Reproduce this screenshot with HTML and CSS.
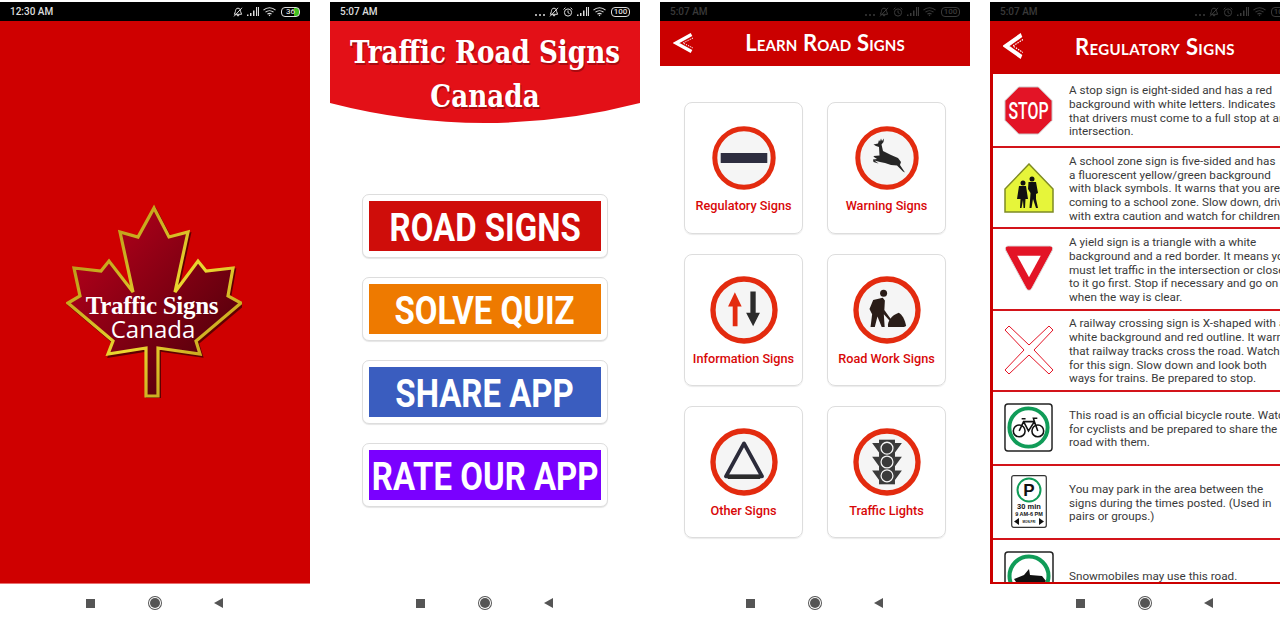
FILE: index.html
```html
<!DOCTYPE html>
<html lang="en">
<head>
    <meta charset="UTF-8">
    <meta name="viewport" content="width=device-width, initial-scale=1.0">
    <title>Traffic Road Signs Canada</title>
    <link rel="stylesheet" href="styles.css">
</head>
<body>
    <svg class="sprite" xmlns="http://www.w3.org/2000/svg">
        <symbol id="bell-off" viewBox="0 0 10 10"><path d="M5 1.200C3 1.200 2.400 3 2.400 4.500L1.400 7.300H8.600L7.600 4.500C7.600 3 7 1.200 5 1.200ZM4 8.200H6L5 9.200ZM1 9.400L9 .8" fill="none" stroke="currentColor" stroke-width="1"/></symbol>
        <symbol id="alarm" viewBox="0 0 10 10"><circle cx="5" cy="5.500" r="3.600" fill="none" stroke="currentColor"/><path d="M5 3.500V5.700L6.500 6.500M.6 2.400L2.400 .7M9.400 2.400L7.600 .7" fill="none" stroke="currentColor"/></symbol>
        <symbol id="signal" viewBox="0 0 12 9"><path d="M0 7.500h1.500V9H0ZM3 6h1.500v3H3ZM6 3.500h1.500V9H6ZM9 0h1.200v9H9ZM11 0h1v9h-1Z" fill="currentColor"/></symbol>
        <symbol id="wifi" viewBox="0 0 13 10"><path d="M.5 3.200C4 0 9 0 12.500 3.200M2.500 5.200C4.800 3.200 8.200 3.200 10.500 5.200M4.400 7.200C5.600 6.200 7.400 6.200 8.600 7.200" fill="none" stroke="currentColor" stroke-width="1.100"/><path d="M5.600 8.300L6.500 7.500 7.400 8.300 6.500 9.300Z" fill="currentColor"/></symbol>
        <symbol id="back" viewBox="0 0 20 20" preserveAspectRatio="none"><path d="M18.500 1.500L3 10 18.500 18.500" fill="none" stroke="#fff" stroke-width="3.400"/><path d="M20 5L10 10 20 15" fill="none" stroke="#fff" stroke-width="1" stroke-dasharray="1.400 1"/></symbol>
    </svg>

    <main class="phones">
        <!-- splash -->
        <section class="phone">
            <div class="status">
                <span class="time">12:30 AM</span>
                <div class="status-icons">
                    <svg class="ic-10"><use href="#bell-off"/></svg>
                    <svg class="ic-signal"><use href="#signal"/></svg>
                    <svg class="ic-wifi"><use href="#wifi"/></svg>
                    <span class="battery battery-low">36</span>
                </div>
            </div>
            <div class="screen splash">
                <svg class="logo" viewBox="0 0 176 194" xmlns="http://www.w3.org/2000/svg">
                    <defs>
                        <linearGradient id="leaf" x1="0" y1="0" x2="1" y2="1">
                            <stop offset="0" stop-color="#c4001d"/>
                            <stop offset="1" stop-color="#3e0008"/>
                        </linearGradient>
                        <linearGradient id="gold" x1="0" y1="0" x2="1" y2="1">
                            <stop offset="0" stop-color="#a8820e"/>
                            <stop offset=".55" stop-color="#ecd830"/>
                            <stop offset="1" stop-color="#a87c10"/>
                        </linearGradient>
                    </defs>
                    <polygon points="88,4 103,33 122,28 109,88 132,57 140,67 167,64 162,92 175,99 130,137 134,150 92,144 92,192 80,192 80,144 42,150 47,137 2,99 14,92 8,64 35,67 43,57 67,88 54,28 72,33" transform="translate(1.500,2)" fill="#3a0000" stroke="#3a0000" stroke-width="3" opacity=".75"/>
                    <polygon points="88,4 103,33 122,28 109,88 132,57 140,67 167,64 162,92 175,99 130,137 134,150 92,144 92,192 80,192 80,144 42,150 47,137 2,99 14,92 8,64 35,67 43,57 67,88 54,28 72,33" fill="url(#leaf)" stroke="url(#gold)" stroke-width="3.200"/>
                    <text class="logo-title" x="86" y="110" text-anchor="middle">Traffic Signs</text>
                    <text class="logo-sub" x="87" y="134" text-anchor="middle">Canada</text>
                </svg>
            </div>
            <div class="nav"><i class="nav-square"></i><i class="nav-circle"></i><i class="nav-back"></i></div>
        </section>

        <!-- main menu -->
        <section class="phone">
            <div class="status">
                <span class="time">5:07 AM</span>
                <div class="status-icons">
                    <span class="dots"><i></i><i></i><i></i></span>
                    <svg class="ic-10"><use href="#bell-off"/></svg>
                    <svg class="ic-10"><use href="#alarm"/></svg>
                    <svg class="ic-signal"><use href="#signal"/></svg>
                    <svg class="ic-wifi"><use href="#wifi"/></svg>
                    <span class="battery">100</span>
                </div>
            </div>
            <div class="screen menu">
                <h1 class="banner"><span>Traffic Road Signs</span><span>Canada</span></h1>
                <div class="menu-list">
                    <a class="menu-btn"><span class="btn-red"><b>ROAD SIGNS</b></span></a>
                    <a class="menu-btn"><span class="btn-orange"><b>SOLVE QUIZ</b></span></a>
                    <a class="menu-btn"><span class="btn-blue"><b>SHARE APP</b></span></a>
                    <a class="menu-btn"><span class="btn-purple"><b>RATE OUR APP</b></span></a>
                </div>
            </div>
            <div class="nav"><i class="nav-square"></i><i class="nav-circle"></i><i class="nav-back"></i></div>
        </section>

        <!-- categories -->
        <section class="phone">
            <div class="status dim">
                <span class="time">5:07 AM</span>
                <div class="status-icons">
                    <span class="dots"><i></i><i></i><i></i></span>
                    <svg class="ic-10"><use href="#bell-off"/></svg>
                    <svg class="ic-10"><use href="#alarm"/></svg>
                    <svg class="ic-signal"><use href="#signal"/></svg>
                    <svg class="ic-wifi"><use href="#wifi"/></svg>
                    <span class="battery">100</span>
                </div>
            </div>
            <div class="screen">
                <header class="topbar">
                    <svg class="back"><use href="#back"/></svg>
                    <h2>Learn Road Signs</h2>
                </header>
                <div class="cards">
                    <div class="card">
                        <svg class="sign" viewBox="0 0 64 64"><circle class="ring" cx="32" cy="32" r="29.200"/><rect x="8.700" y="27" width="46.600" height="10" rx=".5" fill="#2d2d3f"/></svg>
                        <span>Regulatory Signs</span>
                    </div>
                    <div class="card">
                        <svg class="sign" viewBox="0 0 64 64"><circle class="ring" cx="32" cy="32" r="29.200"/><path d="M18.500 18.500L23 17.500 24 14 25 15.500 26 12.500 27 15 29 12.500 28.500 16 26.500 18.500 28 25 36 29 43 32 46 36 45 39 50 46.500 48 45.500 42 39.500 36 39 30 37 25 36 19.500 34.500 23.500 37.500 18.500 36 18 33.500 22 33 19 31 18.500 30 24.500 29.500 24 21 21 20Z" fill="#262626"/></svg>
                        <span>Warning Signs</span>
                    </div>
                    <div class="card">
                        <svg class="sign sign-lg" viewBox="0 0 64 64"><circle class="ring" cx="32" cy="32" r="29.200"/><path d="M23.400 15.400L29.800 28.800H25.900V47.400H21.400V28.800H17Z" fill="#e32b0f"/><path d="M38 14.700H43V34.600H47L40.600 47.400 34 34.600H38Z" fill="#2b2b2b"/></svg>
                        <span>Information Signs</span>
                    </div>
                    <div class="card">
                        <svg class="sign sign-lg" viewBox="0 0 64 64"><circle class="ring" cx="32" cy="32" r="29.200"/><circle cx="28.800" cy="16.300" r="3.300" fill="#2a1d18"/><path d="M15.500 31L19 22.500 28 20.500 30 23 29.500 32 33 37 36 41 34.500 42 29 36 29.800 48H27L23 38 20.500 48H16.500L18 36Z" fill="#2a1d18"/><path d="M33 48C32 43 36 37 43 34.500C46 36 49 41 50 47L48 48Z" fill="#2a1d18"/></svg>
                        <span>Road Work Signs</span>
                    </div>
                    <div class="card">
                        <svg class="sign sign-lg" viewBox="0 0 64 64"><circle class="ring" cx="32" cy="32" r="29.200"/><path d="M32 14.500L15 45.500H49Z" fill="none" stroke="#2b2b3a" stroke-width="3.600" stroke-linejoin="round"/><path d="M15 44H49L47 48H17Z" fill="#2b2b2b"/></svg>
                        <span>Other Signs</span>
                    </div>
                    <div class="card">
                        <svg class="sign sign-lg" viewBox="0 0 64 64"><circle class="ring" cx="32" cy="32" r="29.200"/><path d="M18 14H24.500V23ZM46 14H39.500V23ZM18 27H24.500V36ZM46 27H39.500V36ZM18 40H24.500V49ZM46 40H39.500V49Z" fill="#3a3a3a"/><rect x="24.500" y="11" width="15" height="42" fill="#3a3a3a"/><g class="lamp"><circle cx="32" cy="19" r="5.600"/><circle cx="32" cy="32" r="5.600"/><circle cx="32" cy="45" r="5.600"/></g></svg>
                        <span>Traffic Lights</span>
                    </div>
                </div>
            </div>
            <div class="nav"><i class="nav-square"></i><i class="nav-circle"></i><i class="nav-back"></i></div>
        </section>

        <!-- sign list -->
        <section class="phone">
            <div class="status dim">
                <span class="time">5:07 AM</span>
                <div class="status-icons">
                    <span class="dots"><i></i><i></i><i></i></span>
                    <svg class="ic-10"><use href="#bell-off"/></svg>
                    <svg class="ic-10"><use href="#alarm"/></svg>
                    <svg class="ic-signal"><use href="#signal"/></svg>
                    <svg class="ic-wifi"><use href="#wifi"/></svg>
                    <span class="battery">100</span>
                </div>
            </div>
            <div class="screen list-screen">
                <header class="topbar topbar-tall">
                    <svg class="back"><use href="#back"/></svg>
                    <h2>Regulatory Signs</h2>
                </header>
                <div class="sign-list">
                    <div class="row row-4">
                        <div class="row-icon">
                            <svg width="49" height="49" viewBox="0 0 50 50"><polygon points="15,1 35,1 49,15 49,35 35,49 15,49 1,35 1,15" fill="#e31426" stroke="#ccc" stroke-width="1"/><text class="stop-text" x="25" y="33.500" text-anchor="middle" textLength="41" lengthAdjust="spacingAndGlyphs">STOP</text></svg>
                        </div>
                        <p>A stop sign is eight-sided and has a red<br>background with white letters. Indicates<br>that drivers must come to a full stop at an<br>intersection.</p>
                    </div>
                    <div class="row row-5">
                        <div class="row-icon">
                            <svg width="50" height="50" viewBox="0 0 50 50"><polygon points="25,1 49,26 49,49 1,49 1,26" fill="#e6f53a" stroke="#7e8a24" stroke-width="1.500"/><g fill="#111"><circle cx="19" cy="20" r="2.500"/><path d="M15 23H22L24 36H21.500L21 45H19.500L19 37 17.500 45H16L16.500 36H13Z"/><circle cx="28" cy="16" r="2.500"/><path d="M24.500 19H32L34 30 32 31 32 36 34 45H32L29 36 27.500 45H25.500L26.500 30 24 26Z"/></g></svg>
                        </div>
                        <p>A school zone sign is five-sided and has<br>a fluorescent yellow/green background<br>with black symbols. It warns that you are<br>coming to a school zone. Slow down, drive<br>with extra caution and watch for children.</p>
                    </div>
                    <div class="row row-5">
                        <div class="row-icon">
                            <svg width="50" height="47" viewBox="0 0 50 48"><path d="M4 1H46C49 1 50 3.500 48.500 6L28 44C26.500 47 23.500 47 22 44L1.500 6C0 3.500 1 1 4 1Z" fill="#e31426" stroke="#ddd"/><polygon points="13,11 37,11 25,33" fill="#fff"/></svg>
                        </div>
                        <p>A yield sign is a triangle with a white<br>background and a red border. It means you<br>must let traffic in the intersection or close<br>to it go first. Stop if necessary and go on<br>when the way is clear.</p>
                    </div>
                    <div class="row row-5">
                        <div class="row-icon">
                            <svg width="50" height="50" viewBox="0 0 50 50"><path d="M5 1L25 20 45 1 49 5 30 25 49 45 45 49 25 30 5 49 1 45 20 25 1 5Z" fill="#fff" stroke="#e31426" stroke-width="1"/></svg>
                        </div>
                        <p>A railway crossing sign is X-shaped with a<br>white background and red outline. It warns<br>that railway tracks cross the road. Watch<br>for this sign. Slow down and look both<br>ways for trains. Be prepared to stop.</p>
                    </div>
                    <div class="row row-3">
                        <div class="row-icon">
                            <svg width="49" height="49" viewBox="0 0 50 50"><rect x="1" y="1" width="48" height="48" rx="3" fill="#fff" stroke="#222" stroke-width="1.500"/><circle cx="25" cy="25" r="19.500" fill="#fff" stroke="#109c58" stroke-width="4"/><g fill="none" stroke="#111" stroke-width="1.600"><circle cx="15.500" cy="28.500" r="6"/><circle cx="34.500" cy="28.500" r="6"/><path d="M15.500 28.500L20 19 31 19 34.500 28.500M20 19L25 28.500 31 19M18 16H22M31 19L30 15.500H34"/></g></svg>
                        </div>
                        <p>This road is an official bicycle route. Watch<br>for cyclists and be prepared to share the<br>road with them.</p>
                    </div>
                    <div class="row row-3">
                        <div class="row-icon">
                            <svg width="36" height="53" viewBox="0 0 36 53"><rect x=".7" y=".7" width="34.600" height="51.600" rx="2" fill="#fff" stroke="#333" stroke-width="1.200"/><circle cx="18" cy="15" r="11.500" fill="#fff" stroke="#109c58" stroke-width="2"/><text class="park-p" x="18" y="20.500" text-anchor="middle">P</text><text class="park-min" x="18" y="34" text-anchor="middle">30 min</text><text class="park-hours" x="18" y="41" text-anchor="middle">9 AM-6 PM</text><path d="M3 46.500L8 43V50ZM33 46.500L28 43V50Z" fill="#111"/><text class="park-days" x="18" y="48" text-anchor="middle">MON-FRI</text></svg>
                        </div>
                        <p>You may park in the area between the<br>signs during the times posted. (Used in<br>pairs or groups.)</p>
                    </div>
                    <div class="row row-snow">
                        <div class="row-icon">
                            <svg width="50" height="50" viewBox="0 0 50 50"><rect x="1" y="1" width="48" height="48" rx="3" fill="#fff" stroke="#222" stroke-width="1.500"/><circle cx="25" cy="25" r="19.500" fill="#fff" stroke="#109c58" stroke-width="4"/><path d="M10 28L20 24 25 18 26 24 38 25 42 30 38 34H14Z" fill="#111"/></svg>
                        </div>
                        <p>Snowmobiles may use this road.</p>
                    </div>
                </div>
            </div>
            <div class="nav"><i class="nav-square"></i><i class="nav-circle"></i><i class="nav-back"></i></div>
        </section>
    </main>
</body>
</html>
```

FILE: styles.css
```css
html, body {
    height: 100%;
    overflow: hidden;
}
body {
    margin: 0;
    background: #fff;
    font-family: Roboto, sans-serif;
    color: #333;
}
.sprite {
    display: none;
}
.phones {
    display: flex;
    gap: 20px;
    padding-top: 2px;
}
.phone {
    flex: 0 0 310px;
    width: 310px;
    display: flex;
    flex-direction: column;
}

/* status bar */
.status {
    height: 19px;
    background: #000;
    color: #ddd;
    display: flex;
    align-items: center;
    justify-content: space-between;
    padding: 0 10px;
    font-size: 10px;
    font-weight: 500;
}
.status.dim {
    color: #3a3a3a;
}
.status-icons {
    display: flex;
    align-items: center;
    gap: 4px;
}
.ic-10 {
    width: 10px;
    height: 10px;
}
.ic-signal {
    width: 12px;
    height: 9px;
}
.ic-wifi {
    width: 13px;
    height: 10px;
}
.dots {
    display: flex;
    gap: 2px;
    align-items: flex-end;
    height: 8px;
}
.dots i {
    width: 2px;
    height: 2px;
    background: currentColor;
    border-radius: 50%;
}
.battery {
    width: 17px;
    height: 8px;
    border: 1px solid currentColor;
    border-radius: 4px;
    font-size: 8px;
    line-height: 8px;
    text-align: center;
    margin-left: 1px;
}
.battery-low {
    background: linear-gradient(to right, transparent 70%, #3fbf1f 70%);
}

/* screens */
.screen {
    height: 563px;
    background: #fff;
    overflow: hidden;
}
.splash {
    background: #cf0000;
    display: flex;
    justify-content: center;
    border-bottom: 1px solid #e87070;
    box-sizing: border-box;
}
.logo {
    width: 176px;
    height: 194px;
    margin: 183px 0 0 -2px;
}
.logo-title {
    font: bold 25px "Liberation Serif", serif;
    letter-spacing: -.3px;
    fill: #fff;
}
.logo-sub {
    font: 24px "Open Sans", sans-serif;
    fill: #fff;
}

/* menu */
.banner {
    margin: 0;
    height: 102px;
    padding-top: 9px;
    background: #e31017;
    color: #fff;
    font: bold 32px/44px "DejaVu Serif", serif;
    text-shadow: 1px 2px 0 #a80b10;
    clip-path: path("M0 0H310V82Q155 122 0 82Z");
}
.banner span {
    display: flex;
    justify-content: center;
    white-space: nowrap;
    transform: scaleX(.82);
}
.menu-list {
    display: flex;
    flex-direction: column;
    gap: 19px;
    padding: 62px 32px 0;
}
.menu-btn {
    display: block;
    width: 232px;
    height: 50px;
    padding: 6px;
    background: #fff;
    border: 1px solid #ddd;
    border-radius: 7px;
    box-shadow: 0 1px 1px rgba(0,0,0,0.1);
}
.menu-btn span {
    display: flex;
    height: 50px;
    padding-top: 4px;
    box-sizing: border-box;
    align-items: center;
    justify-content: center;
    color: #fff;
}
.menu-btn b {
    display: block;
    font: bold 39px Roboto, sans-serif;
    white-space: nowrap;
    transform: scaleX(.845);
}
.btn-red {
    background: #cf0d0a;
}
.btn-orange {
    background: #ee7a00;
}
.btn-blue {
    background: #3a5dbf;
}
.btn-purple {
    background: #7a00ff;
}

/* top bar */
.topbar {
    height: 45px;
    background: #cb0000;
    display: flex;
    align-items: center;
    justify-content: center;
    padding-left: 20px;
    position: relative;
}
.topbar-tall {
    height: 53px;
}
.topbar h2 {
    margin: -3px 0 0;
    color: #fff;
    font: 700 22px Lato, sans-serif;
    font-variant: small-caps;
    letter-spacing: .15px;
}
.topbar-tall h2 {
    letter-spacing: .38px;
}
.back {
    position: absolute;
    left: 13px;
    top: 12px;
    width: 20px;
    height: 20px;
}
.topbar-tall .back {
    height: 26px;
}

/* category cards */
.cards {
    display: grid;
    grid-template-columns: 119px 119px;
    grid-auto-rows: 132px;
    column-gap: 24px;
    row-gap: 20px;
    padding: 36px 24px 0;
}
.card {
    border: 1px solid #ddd;
    border-radius: 8px;
    box-shadow: 0 1px 1px rgba(0,0,0,0.08);
    display: flex;
    flex-direction: column;
    align-items: center;
    box-sizing: border-box;
    padding-top: 23px;
    color: #d80808;
    font-size: 12.700px;
    font-weight: 500;
}
.card span {
    white-space: nowrap;
    margin-top: 8px;
}
.sign {
    width: 64px;
    height: 64px;
    flex: none;
}
.sign-lg {
    width: 68px;
    height: 68px;
    margin-top: -2px;
}
.sign-lg + span {
    margin-top: 7px;
}
.ring {
    fill: #f5f5f5;
    stroke: #e32b0f;
    stroke-width: 5;
}
.lamp circle {
    fill: #3a3a3a;
    stroke: #f5f5f5;
    stroke-width: 1.200;
}

/* sign list */
.list-screen {
    border-bottom: 2px solid #cb0000;
    box-sizing: border-box;
}
.sign-list {
    width: 307px;
    height: 508px;
    border-left: 3px solid #cb0000;
    overflow: hidden;
}
.row {
    display: flex;
    align-items: center;
    box-sizing: border-box;
    border-bottom: 2px solid #d3141a;
}
.row-4 {
    height: 74px;
}
.row-5 {
    height: 81.300px;
}
.row-3 {
    height: 74px;
}
.row-snow {
    height: 60px;
    border-bottom: none;
    align-items: flex-start;
    padding-top: 11px;
}
.row-icon {
    flex: 0 0 71px;
    display: flex;
    justify-content: center;
}
.row-icon svg {
    display: block;
}
.row p {
    margin: 0 0 0 5px;
    padding-top: 3px;
    font-size: 11.700px;
    line-height: 13.700px;
    color: #3a3a3a;
    white-space: nowrap;
}
.row-snow p {
    margin-top: 16px;
}
.stop-text {
    font: 500 24px Roboto, sans-serif;
    fill: #fff;
}
.park-p {
    font: bold 17px "Liberation Sans", sans-serif;
    fill: #111;
}
.park-min {
    font: bold 7.500px "Liberation Sans", sans-serif;
    fill: #111;
}
.park-hours {
    font: bold 5.500px "Liberation Sans", sans-serif;
    fill: #111;
}
.park-days {
    font: bold 3px "Liberation Sans", sans-serif;
    fill: #111;
}

/* android nav */
.nav {
    height: 38px;
    display: flex;
    align-items: center;
    justify-content: center;
    gap: 54px;
    padding-right: 2px;
}
.nav-square {
    width: 9px;
    height: 9px;
    margin-right: 1px;
    background: #555;
}
.nav-circle {
    width: 10px;
    height: 10px;
    background: #555;
    border-radius: 50%;
    box-shadow: 0 0 0 1px #fff, 0 0 0 2px #555;
}
.nav-back {
    width: 0;
    height: 0;
    border-style: solid;
    border-width: 5px 9px 5px 0;
    border-color: transparent #555 transparent transparent;
}
```
